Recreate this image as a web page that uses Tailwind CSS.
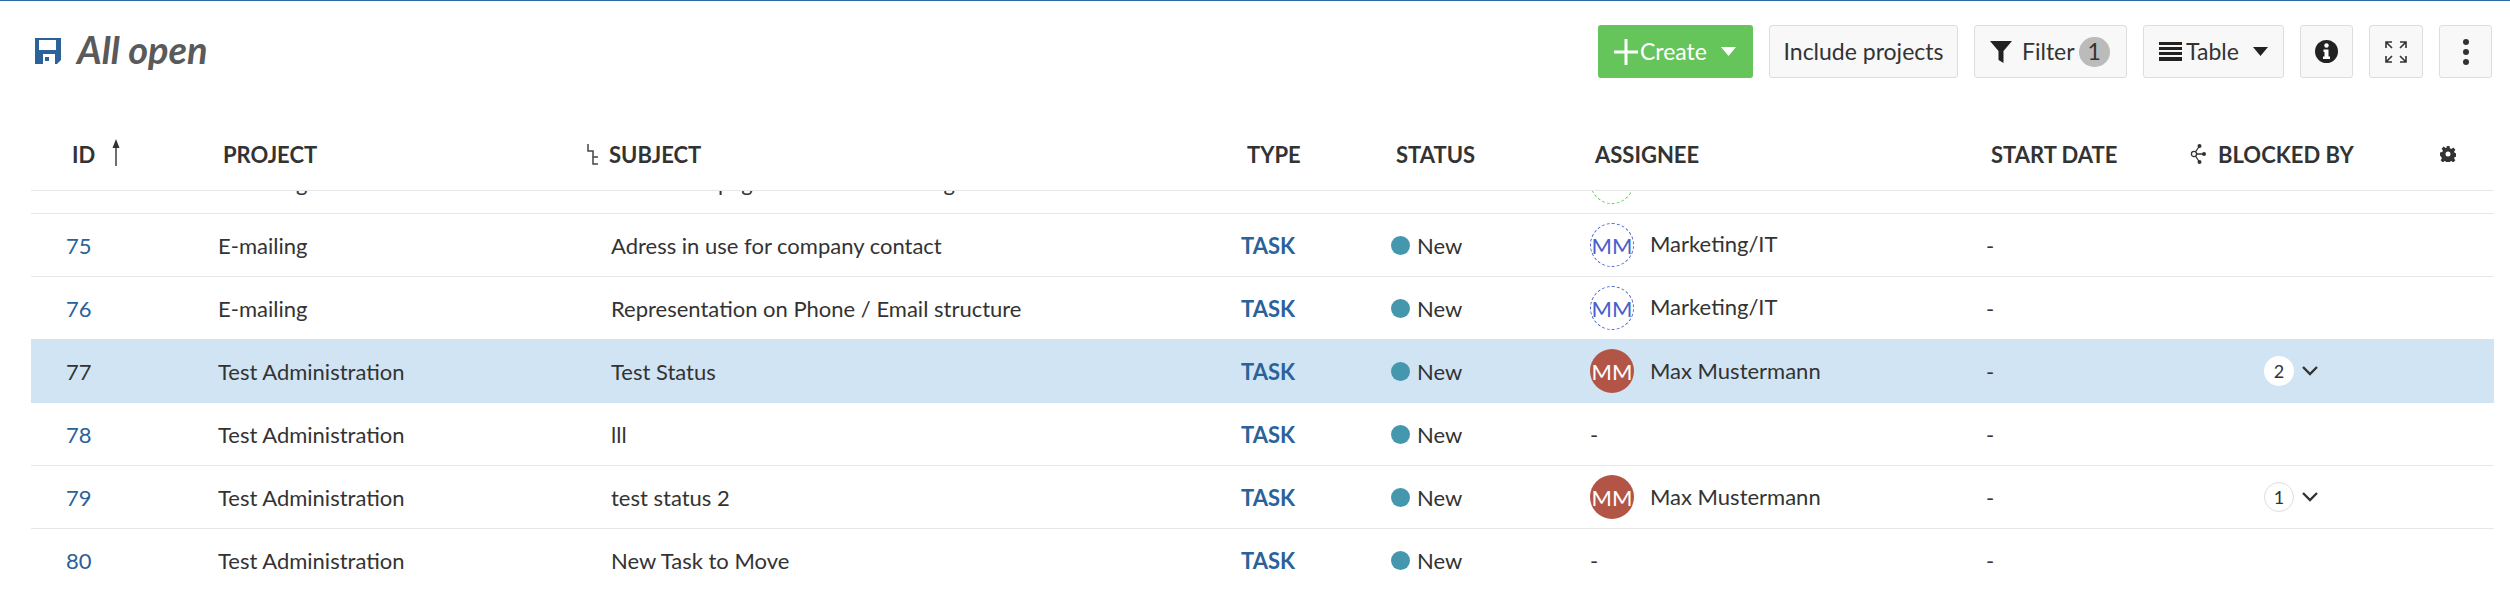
<!DOCTYPE html>
<html>
<head>
<meta charset="utf-8">
<script src="https://cdn.jsdelivr.net/npm/@tailwindcss/browser@4"></script>
<title>All open</title>
</head>
<body class="bg-white">
<div class="w-[2510px] h-[592px] overflow-hidden bg-white border-t border-[#2b6aa4] font-['Lato','Noto_Sans',sans-serif] text-[22px] text-[#333]">
  <!-- toolbar -->
  <div class="flex items-start justify-between h-[102px] pl-[35px] pr-[18px] pt-[24px]">
    <div class="flex items-center gap-[16px] h-[53px]">
      <svg class="w-[26px] h-[26px] -mt-[1px]" viewBox="0 0 26 26"><path fill="#2a6299" d="M0 0h26v22l-4 4H0z"/><path fill="#fff" d="M4 2h17v10H4z"/><path fill="#fff" d="M8 16h12v10H8z"/><path fill="#2a6299" d="M10 19h4v4h-4z"/></svg>
      <span class="text-[38px] leading-none font-bold italic text-[#5a5a5a] -mt-[5px]">All open</span>
    </div>
    <div class="flex items-center gap-[16px] text-[23px]">
      <button class="flex items-center w-[155px] h-[53px] pl-[16px] rounded-[3px] bg-[#65c45a] text-white">
        <svg class="w-[24px] h-[26px] mr-[2px]" viewBox="0 0 24 26"><path stroke="#fff" stroke-width="3" d="M12 0v26M0 13h24"/></svg>
        <span class="-mt-[1px]">Create</span>
        <svg class="w-[15px] h-[9px] ml-[14px]" viewBox="0 0 15 9"><path fill="#fff" d="M0 0h15L7.500 9z"/></svg>
      </button>
      <button class="flex items-center justify-center w-[189px] h-[53px] rounded-[3px] border border-[#ddd] bg-[#f8f8f8]"><span class="-mt-[1px]">Include projects</span></button>
      <button class="flex items-center w-[153px] h-[53px] pl-[15px] rounded-[3px] border border-[#ddd] bg-[#f8f8f8]">
        <svg class="w-[22px] h-[22px] mr-[10px]" viewBox="0 0 22 22"><path fill="#222" d="M0 0h22l-8.500 10v12l-5-3v-9z"/></svg>
        <span class="-mt-[1px]">Filter</span>
        <span class="flex items-center justify-center w-[31px] h-[30px] ml-[4px] rounded-full bg-[#bbb]">1</span>
      </button>
      <button class="flex items-center w-[141px] h-[53px] pl-[15px] rounded-[3px] border border-[#ddd] bg-[#f8f8f8]">
        <svg class="w-[23px] h-[19px] mr-[4px]" viewBox="0 0 23 19"><path fill="#222" d="M0 0h23v3H0zM0 5h23v3H0zM0 10h23v3H0zM0 15h23v4H0z"/></svg>
        <span class="-mt-[1px]">Table</span>
        <svg class="w-[15px] h-[9px] ml-[14px]" viewBox="0 0 15 9"><path fill="#222" d="M0 0h15L7.500 9z"/></svg>
      </button>
      <button class="flex items-center justify-center w-[53px] h-[53px] rounded-[3px] border border-[#ddd] bg-[#f8f8f8]">
        <svg class="w-[23px] h-[23px]" viewBox="0 0 23 23"><circle cx="11.500" cy="11.500" r="11.500" fill="#222"/><circle cx="11.500" cy="5.500" r="2.200" fill="#fff"/><path fill="#fff" d="M8.500 9.500h5v7h1.500v2.500H8v-2.500h1.500v-4.500h-1z"/></svg>
      </button>
      <button class="flex items-center justify-center w-[54px] h-[53px] rounded-[3px] border border-[#ddd] bg-[#f8f8f8]">
        <svg class="w-[22px] h-[22px]" viewBox="0 0 22 22" fill="none" stroke="#333" stroke-width="1.600"><path d="M1 7V1h6M1 1l6 6M21 7V1h-6M21 1l-6 6M1 15v6h6M1 21l6-6M21 15v6h-6M21 21l-6-6"/></svg>
      </button>
      <button class="flex flex-col items-center justify-center gap-[4px] w-[53px] h-[53px] rounded-[3px] border border-[#ddd] bg-[#f8f8f8]">
        <span class="w-[6px] h-[6px] rounded-full bg-[#333]"></span>
        <span class="w-[6px] h-[6px] rounded-full bg-[#333]"></span>
        <span class="w-[6px] h-[6px] rounded-full bg-[#333]"></span>
      </button>
    </div>
  </div>

  <!-- table -->
  <div class="ml-[31px] w-[2463px]">
    <div class="grid grid-cols-[187px_392px_631px_150px_199px_396px_204px_304px] items-center h-[88px] pt-[15px] border-b border-[#e7e7e7] font-bold text-[#333]">
      <div class="flex items-center pl-[41px]"><span>ID</span>
        <svg class="w-[8px] h-[27px] ml-[17px] -mt-[4px]" viewBox="0 0 8 27"><path fill="#333" d="M4 0l3.500 9H4.700v18H3.300V9H.5z"/></svg>
      </div>
      <div class="pl-[5px]">PROJECT</div>
      <div class="flex items-center -ml-[23px]">
        <svg class="w-[11px] h-[21px] mr-[11px]" viewBox="0 0 11 21" fill="none" stroke="#444" stroke-width="1.500"><path d="M1 0v7h5v13h5M6 13h5"/></svg>
        <span>SUBJECT</span>
      </div>
      <div class="pl-[6px]">TYPE</div>
      <div class="pl-[5px]">STATUS</div>
      <div class="pl-[5px]">ASSIGNEE</div>
      <div class="pl-[5px]">START DATE</div>
      <div class="flex items-center justify-between pr-[38px]">
        <div class="flex items-center">
          <svg class="w-[16px] h-[22px] mr-[12px]" viewBox="0 0 16 22" fill="none" stroke="#333" stroke-width="1.300"><path d="M4 11L9.500 3M4 11l5.500 8M4 11h10"/><circle cx="4" cy="11" r="2.600" fill="#fff"/><circle cx="9.500" cy="3" r="2" fill="#333" stroke="none"/><circle cx="9.500" cy="19" r="2" fill="#333" stroke="none"/><circle cx="14" cy="11" r="2" fill="#333" stroke="none"/></svg>
          <span>BLOCKED BY</span>
        </div>
        <svg class="w-[16px] h-[16px]" viewBox="0 0 16 16"><path fill="#333" fill-rule="evenodd" d="M6.500 0h3l.4 2.300 1.500.6L13.300 1.600l2.100 2.100-1.300 1.900.6 1.500 2.300.4v3l-2.300.4-.6 1.500 1.300 1.900-2.100 2.100-1.900-1.300-1.500.6-.4 2.300h-3l-.4-2.300-1.500-.6-1.900 1.300-2.100-2.100 1.300-1.900-.6-1.500L0 9.500v-3l2.300-.4.6-1.500-1.300-1.900 2.100-2.100 1.900 1.300 1.500-.6zM8 5.500a2.500 2.500 0 100 5 2.500 2.500 0 000-5z"/></svg>
      </div>
    </div>

    <div class="h-[401px] overflow-hidden">
      <!-- row scrolled away under the header -->
      <div class="grid grid-cols-[187px_392px_631px_150px_199px_396px_204px_304px] items-center h-[63px] -mt-[40px] border-b border-[#e7e7e7]">
        <div class="pl-[35px] text-[#2a6299]">74</div>
        <div>E-mailing</div>
        <div class="pl-[1px]">Create the page for the new mailing</div>
        <div></div><div></div>
        <div class="w-[44px] h-[44px] rounded-full border border-dashed border-[#65c45a]"></div>
        <div></div><div></div>
      </div>
      <!-- 75 -->
      <div class="grid grid-cols-[187px_392px_631px_150px_199px_396px_204px_304px] items-center h-[63px] border-b border-[#e7e7e7]">
        <div class="pl-[35px] text-[#2a6299]">75</div>
        <div>E-mailing</div>
        <div class="pl-[1px]">Adress in use for company contact</div>
        <div class="font-bold text-[#2a6299]">TASK</div>
        <div class="flex items-center gap-[7px]"><span class="w-[19px] h-[19px] rounded-full bg-[#4497ad]"></span>New</div>
        <div class="flex items-center gap-[16px]"><span class="flex items-center justify-center w-[44px] h-[44px] rounded-full border border-dashed border-[#4a5fc9] text-[#4a5fc9]">MM</span><span class="-mt-[4px]">Marketing/IT</span></div>
        <div>-</div><div></div>
      </div>
      <!-- 76 -->
      <div class="grid grid-cols-[187px_392px_631px_150px_199px_396px_204px_304px] items-center h-[62px]">
        <div class="pl-[35px] text-[#2a6299]">76</div>
        <div>E-mailing</div>
        <div class="pl-[1px]">Representation on Phone / Email structure</div>
        <div class="font-bold text-[#2a6299]">TASK</div>
        <div class="flex items-center gap-[7px]"><span class="w-[19px] h-[19px] rounded-full bg-[#4497ad]"></span>New</div>
        <div class="flex items-center gap-[16px]"><span class="flex items-center justify-center w-[44px] h-[44px] rounded-full border border-dashed border-[#4a5fc9] text-[#4a5fc9]">MM</span><span class="-mt-[4px]">Marketing/IT</span></div>
        <div>-</div><div></div>
      </div>
      <!-- 77 -->
      <div class="grid grid-cols-[187px_392px_631px_150px_199px_396px_204px_304px] items-center h-[64px] bg-[#d1e4f3]">
        <div class="pl-[35px]">77</div>
        <div>Test Administration</div>
        <div class="pl-[1px]">Test Status</div>
        <div class="font-bold text-[#2a6299]">TASK</div>
        <div class="flex items-center gap-[7px]"><span class="w-[19px] h-[19px] rounded-full bg-[#4497ad]"></span>New</div>
        <div class="flex items-center gap-[16px]"><span class="flex items-center justify-center w-[44px] h-[44px] rounded-full bg-[#b25546] text-white">MM</span><span class="-mt-[1px]">Max Mustermann</span></div>
        <div>-</div>
        <div class="flex items-center pl-[74px]"><span class="flex items-center justify-center w-[30px] h-[30px] rounded-full bg-white text-[18px]">2</span>
          <svg class="w-[16px] h-[10px] ml-[8px]" viewBox="0 0 16 10" fill="none" stroke="#333" stroke-width="2.400"><path d="M1 1l7 7 7-7"/></svg></div>
      </div>
      <!-- 78 -->
      <div class="grid grid-cols-[187px_392px_631px_150px_199px_396px_204px_304px] items-center h-[63px] border-b border-[#e7e7e7]">
        <div class="pl-[35px] text-[#2a6299]">78</div>
        <div>Test Administration</div>
        <div class="pl-[1px]">lll</div>
        <div class="font-bold text-[#2a6299]">TASK</div>
        <div class="flex items-center gap-[7px]"><span class="w-[19px] h-[19px] rounded-full bg-[#4497ad]"></span>New</div>
        <div>-</div>
        <div>-</div><div></div>
      </div>
      <!-- 79 -->
      <div class="grid grid-cols-[187px_392px_631px_150px_199px_396px_204px_304px] items-center h-[63px] border-b border-[#e7e7e7]">
        <div class="pl-[35px] text-[#2a6299]">79</div>
        <div>Test Administration</div>
        <div class="pl-[1px]">test status 2</div>
        <div class="font-bold text-[#2a6299]">TASK</div>
        <div class="flex items-center gap-[7px]"><span class="w-[19px] h-[19px] rounded-full bg-[#4497ad]"></span>New</div>
        <div class="flex items-center gap-[16px]"><span class="flex items-center justify-center w-[44px] h-[44px] rounded-full bg-[#b25546] text-white">MM</span><span class="-mt-[1px]">Max Mustermann</span></div>
        <div>-</div>
        <div class="flex items-center pl-[74px]"><span class="flex items-center justify-center w-[30px] h-[30px] rounded-full bg-white border border-[#ddd] text-[18px]">1</span>
          <svg class="w-[16px] h-[10px] ml-[8px]" viewBox="0 0 16 10" fill="none" stroke="#333" stroke-width="2.400"><path d="M1 1l7 7 7-7"/></svg></div>
      </div>
      <!-- 80 -->
      <div class="grid grid-cols-[187px_392px_631px_150px_199px_396px_204px_304px] items-center h-[63px]">
        <div class="pl-[35px] text-[#2a6299]">80</div>
        <div>Test Administration</div>
        <div class="pl-[1px]">New Task to Move</div>
        <div class="font-bold text-[#2a6299]">TASK</div>
        <div class="flex items-center gap-[7px]"><span class="w-[19px] h-[19px] rounded-full bg-[#4497ad]"></span>New</div>
        <div>-</div>
        <div>-</div><div></div>
      </div>
    </div>
  </div>
</div>
</body>
</html>
